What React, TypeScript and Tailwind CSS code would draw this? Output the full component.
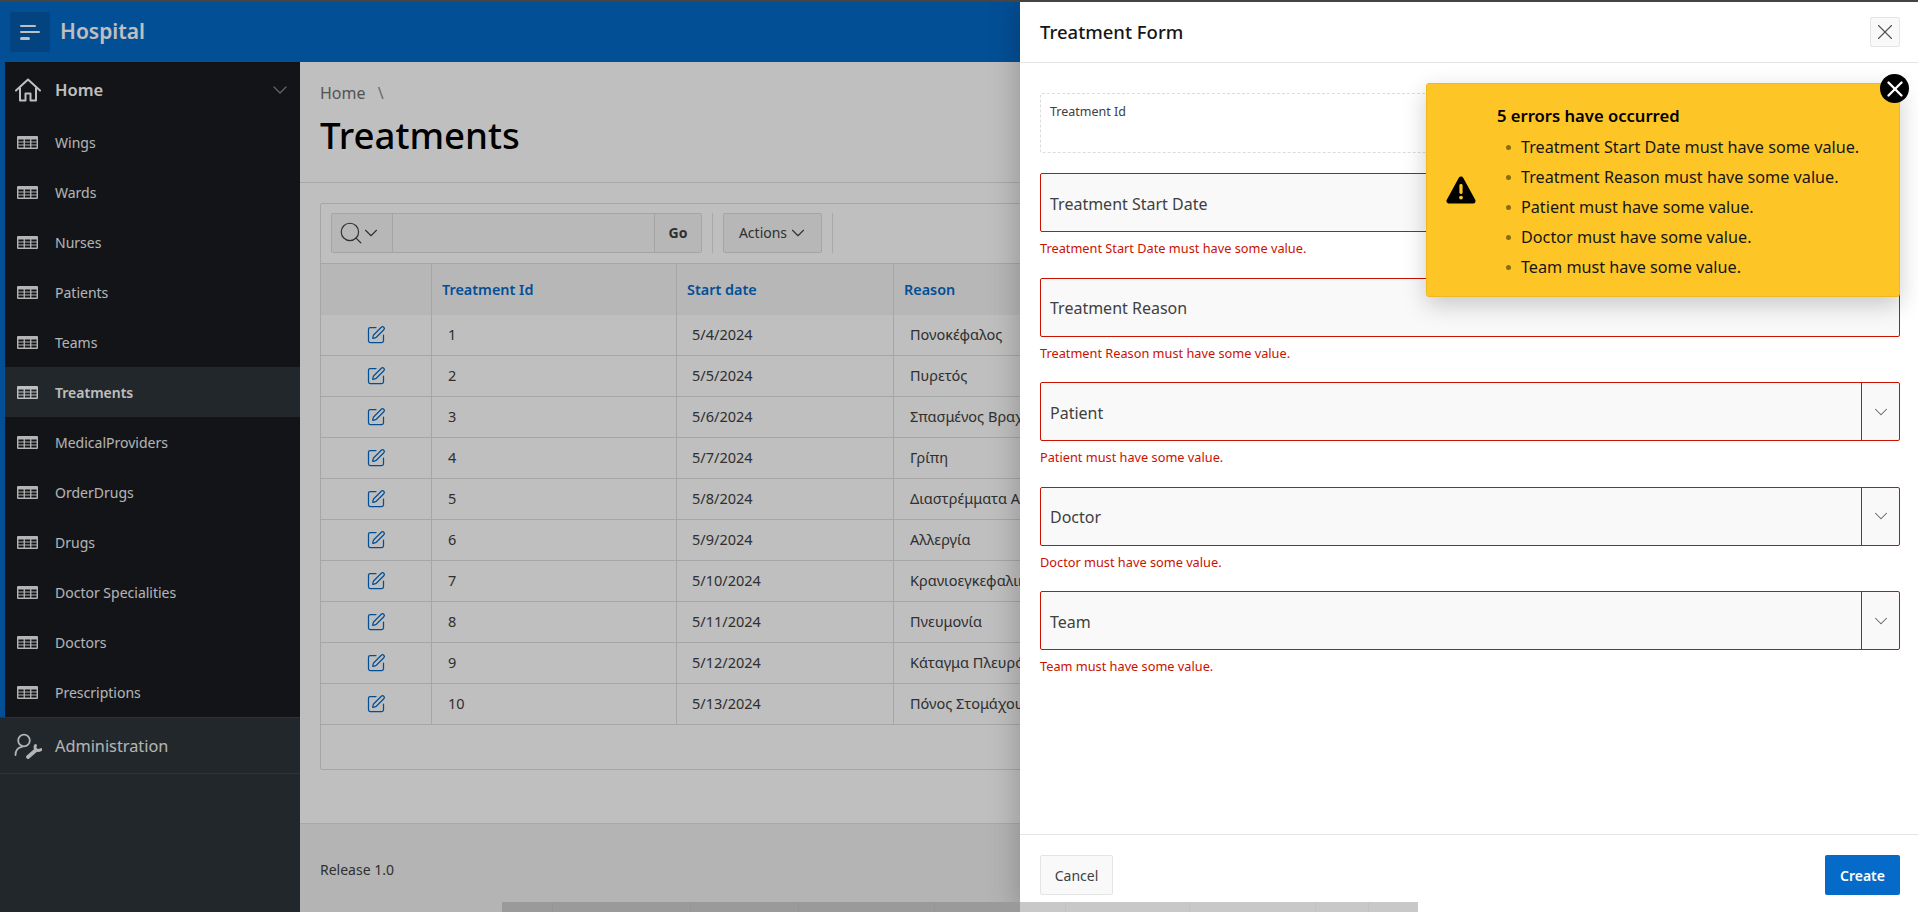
import { ChevronDown, Search, SquarePen, X } from "lucide-react";

const navItems = [
  "Wings",
  "Wards",
  "Nurses",
  "Patients",
  "Teams",
  "Treatments",
  "MedicalProviders",
  "OrderDrugs",
  "Drugs",
  "Doctor Specialities",
  "Doctors",
  "Prescriptions",
];

const rows = [
  ["1", "5/4/2024", "Πονοκέφαλος"],
  ["2", "5/5/2024", "Πυρετός"],
  ["3", "5/6/2024", "Σπασμένος Βραχίονας"],
  ["4", "5/7/2024", "Γρίπη"],
  ["5", "5/8/2024", "Διαστρέμματα Αστραγάλου"],
  ["6", "5/9/2024", "Αλλεργία"],
  ["7", "5/10/2024", "Κρανιοεγκεφαλική Κάκωση"],
  ["8", "5/11/2024", "Πνευμονία"],
  ["9", "5/12/2024", "Κάταγμα Πλευράς"],
  ["10", "5/13/2024", "Πόνος Στομάχου"],
];

const errors = [
  "Treatment Start Date must have some value.",
  "Treatment Reason must have some value.",
  "Patient must have some value.",
  "Doctor must have some value.",
  "Team must have some value.",
];

const scrollSegments = [
  "w-[50px] bg-[#9a9a9a]",
  "w-[138px] bg-[#9a9a9a] border-l border-[#959595]",
  "w-[108px] bg-[#9a9a9a] border-l border-[#959595]",
  "w-[136px] bg-[#9a9a9a] border-l border-[#959595]",
  "w-[86px] bg-[#9a9a9a] border-l border-[#959595]",
  "w-[45px] bg-[#c8c8c8]",
  "w-[124px] bg-[#c8c8c8] border-l border-[#c2c2c2]",
  "w-[126px] bg-[#c8c8c8] border-l border-[#c2c2c2]",
  "w-[53px] bg-[#c8c8c8] border-l border-[#c2c2c2]",
  "w-[50px] bg-[#c8c8c8] border-l border-[#c2c2c2]",
];

function TableIcon() {
  const cells = [3.6, 6.6, 9.6]
    .flatMap((y) => [1.4, 7.9, 14.4].map((x) => `M${x} ${y}h5.2v2H${x}Z`))
    .join("");
  return (
    <svg width="21" height="13" viewBox="0 0 21 13" className="shrink-0">
      <path
        fillRule="evenodd"
        fill="currentColor"
        d={`M1 0h19a1 1 0 0 1 1 1v11a1 1 0 0 1-1 1H1a1 1 0 0 1-1-1V1a1 1 0 0 1 1-1Z${cells}`}
      />
    </svg>
  );
}

function HomeIcon() {
  return (
    <svg width="26" height="24" viewBox="0 0 26 24" fill="none" stroke="currentColor" strokeWidth="2" className="shrink-0">
      <path d="M1 12.5 13 1.5l12 11" strokeLinecap="round" strokeLinejoin="round" />
      <path d="M5 9.5V22.5h5.5v-7h5v7H21V9.5" strokeLinejoin="round" />
    </svg>
  );
}

function AdminIcon() {
  return (
    <svg width="28" height="26" viewBox="0 0 28 26" fill="none" stroke="currentColor" className="shrink-0">
      <circle cx="10" cy="7.5" r="5.8" strokeWidth="1.8" />
      <path d="M1.5 22c0-4.5 2.5-7.5 6.5-8.2" strokeWidth="1.8" strokeLinecap="round" />
      <path d="M14 24 21.5 17.5" strokeWidth="3.8" strokeLinecap="round" />
      <path d="M21.5 12.5c-1.6 3 1.4 6.6 5.6 4" strokeWidth="2.8" strokeLinecap="round" />
    </svg>
  );
}

function WarningIcon() {
  return (
    <svg width="30" height="28" viewBox="0 0 30 28" className="shrink-0">
      <path d="M15 3 3 25h24Z" fill="#000" stroke="#000" strokeWidth="5" strokeLinejoin="round" />
      <rect x="13.4" y="8" width="3.2" height="10" rx="1.4" fill="#fec526" />
      <circle cx="15" cy="21.6" r="1.9" fill="#fec526" />
    </svg>
  );
}

function Sidebar() {
  return (
    <aside className="w-[300px] shrink-0 bg-[#2d3439] flex flex-col">
      <div className="bg-[#181b20] border-l-[5px] border-[#056ac8]">
        <div className="h-[55px] flex items-center pl-[10px] pr-[8px] text-white">
          <HomeIcon />
          <span className="ml-[14px] mt-[2px] text-[16.5px] font-semibold">Home</span>
          <ChevronDown size={24} strokeWidth={1.2} className="ml-auto text-[#8a8a8a]" />
        </div>
        {navItems.map((item) => (
          <div
            key={item}
            className={
              item === "Treatments"
                ? "h-[50px] flex items-center pl-[12px] bg-[#2d3439] text-white font-semibold"
                : "h-[50px] flex items-center pl-[12px] text-[#f0f0f0]"
            }
          >
            <TableIcon />
            <span className="ml-[17px] text-[14px]">{item}</span>
          </div>
        ))}
      </div>
      <div className="h-[57px] flex items-center pl-[14px] pt-[1px] text-[#f0f0f0] border-y border-[#3d454b]">
        <AdminIcon />
        <span className="ml-[13px] text-[16.3px]">Administration</span>
      </div>
    </aside>
  );
}

function ReportTable() {
  return (
    <div className="mx-5 mt-[20px] h-[567px] border border-[#dedede] rounded-[2px] bg-white">
      <div className="h-[60px] flex items-center px-[10px] pb-[2px] border-b border-[#dedede]">
        <div className="h-[40px] w-[371px] flex border border-[#dcdcdc] rounded-[2px] text-[#404040]">
          <div className="w-[61px] flex items-center pl-[6px] bg-[#f5f5f5] border-r border-[#dcdcdc]">
            <Search size={26} strokeWidth={1.1} />
            <ChevronDown size={22} strokeWidth={1.2} className="-ml-[4px]" />
          </div>
          <div className="w-[261px] bg-[#f7f7f7]" />
          <div className="flex-1 flex items-center justify-center bg-[#f5f5f5] border-l border-[#dcdcdc] text-[14px] font-bold">
            Go
          </div>
        </div>
        <div className="h-[40px] ml-[10px] border-l border-[#e2e2e2]" />
        <div className="h-[40px] w-[99px] ml-[10px] flex items-center justify-center bg-[#f5f5f5] border border-[#dcdcdc] rounded-[2px] text-[14px] text-[#404040]">
          Actions
          <ChevronDown size={22} strokeWidth={1.2} className="-mr-[3px]" />
        </div>
        <div className="h-[40px] ml-[10px] border-l border-[#e2e2e2]" />
      </div>
      <div className="h-[51px] flex bg-[#f5f5f5] text-[14.4px] font-semibold text-[#056ac8]">
        <div className="w-[111px] border-r border-[#dedede]" />
        <div className="w-[245px] flex items-center pl-[10px] border-r border-[#dedede]">Treatment Id</div>
        <div className="w-[217px] flex items-center pl-[10px] border-r border-[#dedede]">Start date</div>
        <div className="flex-1 flex items-center pl-[10px]">Reason</div>
      </div>
      {rows.map(([id, date, reason]) => (
        <div key={id} className="h-[41px] flex border-b border-[#dedede] text-[14.5px] text-[#404040]">
          <div className="w-[111px] flex items-center justify-center border-r border-[#dedede] text-[#056ac8]">
            <SquarePen size={20} strokeWidth={1.5} />
          </div>
          <div className="w-[245px] flex items-center pl-[16px] border-r border-[#dedede]">{id}</div>
          <div className="w-[217px] flex items-center pl-[15px] border-r border-[#dedede]">{date}</div>
          <div className="flex-1 flex items-center pl-[16px]">{reason}</div>
        </div>
      ))}
    </div>
  );
}

function Field({ label, select }: { label: string; select?: boolean }) {
  return (
    <div className="h-[104.6px]">
      <div className="h-[59px] flex border border-[#cb1100] rounded-[2px] bg-[#f9f9f9] text-[#404040]">
        <div className="flex-1 flex items-center pl-[9px] pt-[2px] text-[16px]">{label}</div>
        {select && (
          <div className="w-[38px] flex items-center justify-center border-l border-[#cb1100] text-[#606060]">
            <ChevronDown size={22} strokeWidth={1.1} />
          </div>
        )}
      </div>
      <p className="pt-[6px] text-[12.75px] leading-[20px] text-[#cb1100]">{label} must have some value.</p>
    </div>
  );
}

function Drawer() {
  return (
    <div className="absolute z-20 top-[2px] bottom-0 right-0 w-[898px] bg-white flex flex-col shadow-[0_0_30px_rgba(0,0,0,0.25)]">
      <div className="h-[61px] shrink-0 flex items-center justify-between pl-5 pr-[18px] border-b border-[#e4e4e4]">
        <h2 className="text-[18.5px] font-medium text-[#161616]">Treatment Form</h2>
        <button className="w-[30px] h-[30px] flex items-center justify-center bg-[#f9f9f9] border border-[#e4e4e4] rounded-[2px] text-[#505050]">
          <X size={26} strokeWidth={1} />
        </button>
      </div>
      <div className="flex-1 px-5 pr-[18px] pt-[30px]">
        <div className="h-[60px] mb-5 px-[9px] pt-[9px] border border-dashed border-[#dcdcdc] rounded-[2px] text-[12.5px] text-[#404040]">
          Treatment Id
        </div>
        <Field label="Treatment Start Date" />
        <Field label="Treatment Reason" />
        <Field label="Patient" select />
        <Field label="Doctor" select />
        <Field label="Team" select />
      </div>
      <div className="h-[78px] shrink-0 flex items-start justify-between pl-5 pr-[18px] pt-[20px] border-t border-[#e4e4e4]">
        <button className="w-[73px] h-[40px] bg-[#f9f9f9] border border-[#e4e4e4] rounded-[2px] text-[14px] text-[#404040]">
          Cancel
        </button>
        <button className="w-[75px] h-[40px] bg-[#056ac8] rounded-[2px] text-[14px] font-semibold text-white">
          Create
        </button>
      </div>
    </div>
  );
}

function ErrorAlert() {
  return (
    <div className="absolute z-30 top-[83px] right-[18px] w-[474px] h-[214px] flex items-center bg-[#fec526] border border-[#f0b81d] rounded-[3px] shadow-[0_8px_24px_rgba(0,0,0,0.2)]">
      <div className="w-[70px] flex justify-end pr-[21px]">
        <WarningIcon />
      </div>
      <div className="pt-[6px] text-[#161616]">
        <h3 className="text-[16.6px] font-semibold leading-[24px] text-black">5 errors have occurred</h3>
        <ul className="mt-[4px]">
          {errors.map((err) => (
            <li key={err} className="h-[30px] flex items-center pl-[9px] text-[16.2px]">
              <span className="w-[5px] h-[5px] rounded-full bg-[#8a6d10] mr-[10px]" />
              {err}
            </li>
          ))}
        </ul>
      </div>
      <button className="absolute -top-[10px] -right-[10px] w-[29px] h-[29px] flex items-center justify-center rounded-full bg-black text-white">
        <X size={26} strokeWidth={2.2} />
      </button>
    </div>
  );
}

export default function App() {
  return (
    <div className="relative w-[1918px] h-[912px] overflow-hidden flex flex-col bg-white font-['Noto_Sans',sans-serif]">
      <div className="h-[2px] shrink-0 bg-[#444444] relative z-40" />
      <header className="h-[60px] shrink-0 flex items-center pl-[10px] bg-[#056ac8] text-white">
        <button className="w-[40px] h-[40px] flex flex-col justify-center gap-[4px] pl-[10px] rounded-[2px] bg-black/15">
          <span className="block h-[2px] w-[16px] bg-white rounded-full" />
          <span className="block h-[2px] w-[20px] bg-white rounded-full" />
          <span className="block h-[3px] w-[10px] bg-white rounded-full" />
        </button>
        <span className="ml-[10px] text-[21px] font-semibold">Hospital</span>
      </header>

      <div className="flex-1 flex min-h-0">
        <Sidebar />
        <main className="flex-1 flex flex-col min-w-0">
          <div className="h-[121px] shrink-0 px-5 pt-[19px] border-b border-[#e2e2e2]">
            <div className="text-[16px] leading-[24px] text-[#707070]">
              Home <span className="ml-[8px] text-[#8f8f8f]">\</span>
            </div>
            <h1 className="mt-[6px] text-[36.6px] leading-[48px] font-medium text-black">Treatments</h1>
          </div>
          <div className="flex-1">
            <ReportTable />
          </div>
          <footer className="h-[89px] shrink-0 flex items-center px-5 pt-[2px] bg-[#f1f1f1] border-t border-[#e2e2e2] text-[14px] text-[#404040]">
            Release 1.0
          </footer>
        </main>
      </div>

      <div className="absolute inset-0 z-10 bg-black/25" />
      <Drawer />
      <ErrorAlert />

      <div className="absolute z-30 left-[502px] bottom-0 h-[10px] flex">
        {scrollSegments.map((seg) => (
          <div key={seg} className={seg} />
        ))}
      </div>
    </div>
  );
}
